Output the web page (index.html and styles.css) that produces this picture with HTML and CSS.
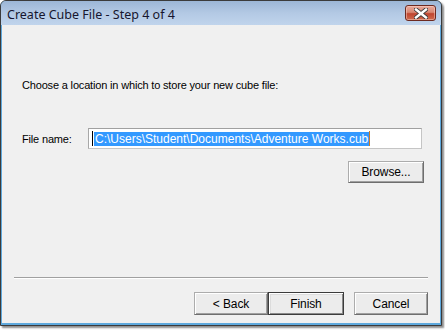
FILE: index.html
```html
<!DOCTYPE html>
<html>
<head>
<meta charset="utf-8">
<link rel="stylesheet" href="styles.css">
</head>
<body>
<div class="window">
  <div class="titlebar">
    <span class="title">Create Cube File - Step 4 of 4</span>
    <div class="close">
      <svg width="14" height="11" viewBox="0 0 14 11">
        <path d="M2 1.5 L12 9.5 M12 1.5 L2 9.5" stroke="#3a3a3a" stroke-width="4.2" stroke-linecap="square" fill="none"/>
        <path d="M2 1.5 L12 9.5 M12 1.5 L2 9.5" stroke="#ffffff" stroke-width="2.4" stroke-linecap="square" fill="none"/>
      </svg>
    </div>
  </div>
  <div class="client">
    <p class="prompt">Choose a location in which to store your new cube file:</p>
    <div class="file-row">
      <span class="label">File name:</span>
      <div class="textbox"><span class="caret"></span><span class="sel">C:\Users\Student\Documents\Adventure Works.cub</span><span class="caret end"></span></div>
    </div>
    <div class="browse-row">
      <div class="btn browse">Browse...</div>
    </div>
    <div class="fill"></div>
    <div class="sep"></div>
    <div class="footer">
      <div class="btn back">&lt; Back</div>
      <div class="btn default">Finish</div>
      <div class="btn cancel">Cancel</div>
    </div>
  </div>
</div>
</body>
</html>
```
FILE: styles.css
```css
html, body {
  margin: 0;
  padding: 0;
  background: #ffffff;
}
body {
  width: 445px;
  height: 330px;
  overflow: hidden;
}
.window {
  width: 440px;
  height: 324px;
  border: 1px solid #3b3b3b;
  border-radius: 6px 6px 0 0;
  background: #5fa9dd;
  display: flex;
  flex-direction: column;
  box-shadow: 2px 2px 2px rgba(0,0,0,0.45);
  overflow: hidden;
}
.titlebar {
  height: 24px;
  flex: none;
  display: flex;
  align-items: flex-start;
  justify-content: space-between;
  background: linear-gradient(to bottom, #9cb6d6 0%, #b3c9e4 50%, #c0d4ec 100%);
  padding: 0 5px 0 6px;
}
.title {
  font-family: "Noto Sans", sans-serif;
  font-size: 12.5px;
  color: #16162e;
  line-height: 14px;
  margin-top: 7px;
}
.close {
  width: 31px;
  height: 16px;
  margin-top: 4px;
  box-sizing: border-box;
  border: 1px solid #6d2a20;
  border-radius: 3px;
  background: linear-gradient(to bottom, #e9a99b 0%, #d88873 45%, #c0452f 55%, #cf6b4f 100%);
  display: flex;
  align-items: center;
  justify-content: center;
  box-shadow: inset 0 0 0 1px rgba(255,220,210,0.45);
}
.close svg { display: block; }
.client {
  flex: 1;
  margin: 0 1px 2px 1px;
  background: #f0f0f0;
  display: flex;
  flex-direction: column;
  font-family: "Liberation Sans", Arial, sans-serif;
  font-size: 11px;
  letter-spacing: -0.17px;
  color: #000;
  padding: 0 12px 8px 20px;
}
.prompt {
  margin: 54px 0 0 0;
  line-height: 13px;
}
.file-row {
  display: flex;
  align-items: center;
  margin: 36px 6px 0 0;
}
.label {
  width: 66px;
  flex: none;
}
.textbox {
  flex: 1;
  height: 21px;
  box-sizing: border-box;
  border: 1px solid #c5c5c5;
  border-top-color: #a0a0a0;
  border-left-color: #a8a8a8;
  background: #fff;
  display: flex;
  align-items: center;
  padding-left: 3px;
  font-size: 12px;
  letter-spacing: 0;
}
.caret {
  width: 1px;
  height: 15px;
  background: #000;
  flex: none;
}
.caret.end { background: #c77a2a; }
.sel {
  background: #3399ff;
  color: #fff;
  line-height: 14px;
  padding: 0 1px;
  margin-left: 1px;
}
.browse-row {
  display: flex;
  justify-content: flex-end;
  margin: 12px 4px 0 0;
}
.btn {
  width: 74px;
  height: 23px;
  box-sizing: border-box;
  border: 1px solid #acacac;
  border-right-color: #6e6e6e;
  border-bottom-color: #6e6e6e;
  box-shadow: inset 1px 1px 0 #ffffff, inset -1px -1px 0 #a0a0a0;
  background: #ececec;
  display: flex;
  align-items: center;
  justify-content: center;
  font-size: 12px;
  letter-spacing: -0.1px;
  line-height: 14px;
}
.browse {
  width: 76px;
  height: 22px;
}
.fill { flex: 1; }
.sep {
  height: 1px;
  background: #a0a0a0;
  border-bottom: 1px solid #ffffff;
  margin: 0 0 13px -8px;
}
.footer {
  display: flex;
  justify-content: flex-end;
}
.btn.default {
  width: 76px;
  border: 1px solid #3c3c3c;
  box-shadow: inset 1px 1px 0 #ffffff, inset -1px -1px 0 #8a8a8a, inset 2px 2px 0 #dcdcdc;
}
.btn.cancel {
  margin-left: 10px;
}
```
